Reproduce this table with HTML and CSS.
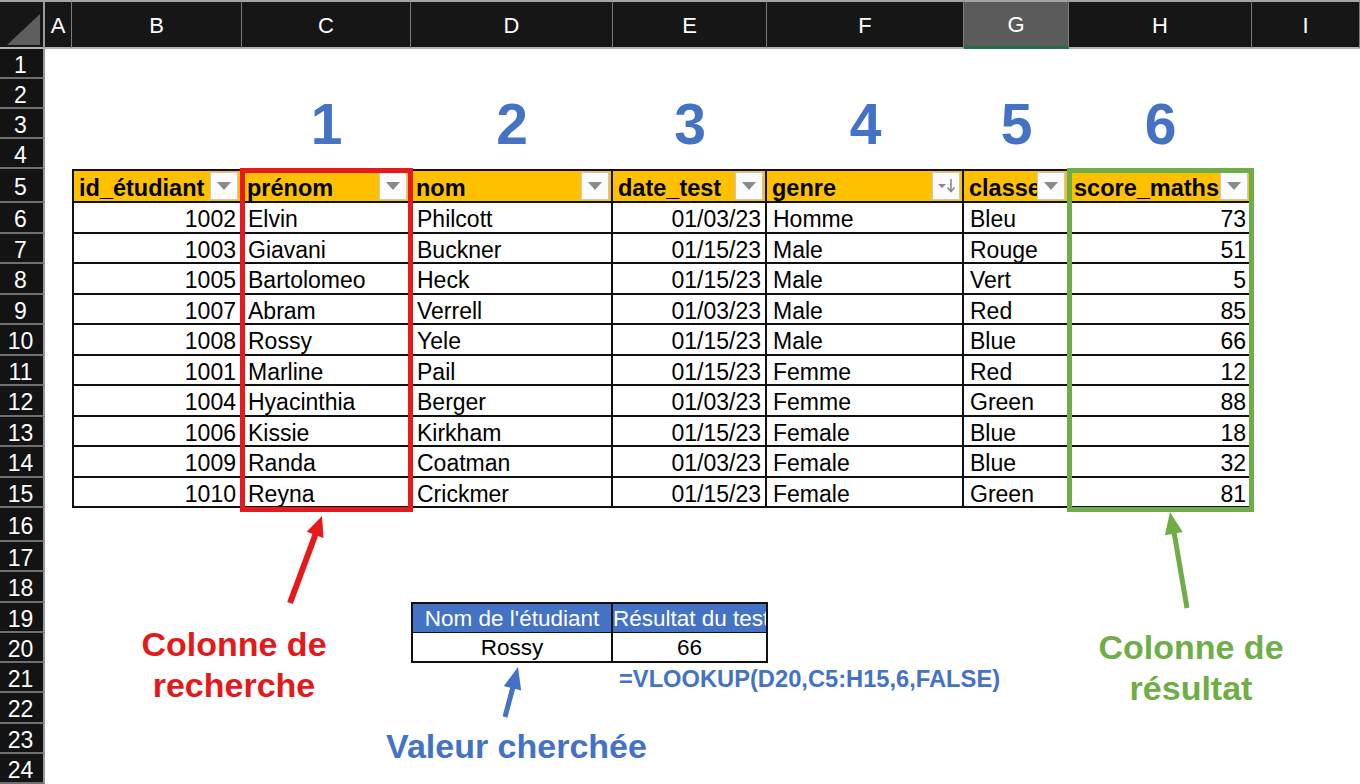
FILE: index.html
```html
<!DOCTYPE html>
<html lang="fr">
<head>
<meta charset="utf-8">
<title>RECHERCHEV</title>
<link rel="stylesheet" href="styles.css">
</head>
<body>
<div class="sheet">
  <div class="corner"><span class="corner-tri"></span></div>
  <div class="colhead">A</div>
  <div class="colhead">B</div>
  <div class="colhead">C</div>
  <div class="colhead">D</div>
  <div class="colhead">E</div>
  <div class="colhead">F</div>
  <div class="colhead colhead-sel">G</div>
  <div class="colhead">H</div>
  <div class="colhead">I</div>

  <div class="rowhead">1</div><div class="rowhead">2</div><div class="rowhead">3</div><div class="rowhead">4</div>
  <div class="rowhead">5</div><div class="rowhead">6</div><div class="rowhead">7</div><div class="rowhead">8</div>
  <div class="rowhead">9</div><div class="rowhead">10</div><div class="rowhead">11</div><div class="rowhead">12</div>
  <div class="rowhead">13</div><div class="rowhead">14</div><div class="rowhead">15</div><div class="rowhead">16</div>
  <div class="rowhead">17</div><div class="rowhead">18</div><div class="rowhead">19</div><div class="rowhead">20</div>
  <div class="rowhead">21</div><div class="rowhead">22</div><div class="rowhead">23</div><div class="rowhead">24</div>

  <div class="num col-c">1</div>
  <div class="num col-d">2</div>
  <div class="num col-e">3</div>
  <div class="num col-f">4</div>
  <div class="num col-g">5</div>
  <div class="num col-h">6</div>

  <div class="tbl">
    <div class="th first"><span class="th-text">id_étudiant</span><span class="fbtn"><span class="tri"></span></span></div>
    <div class="th"><span class="th-text">prénom</span><span class="fbtn"><span class="tri"></span></span></div>
    <div class="th"><span class="th-text">nom</span><span class="fbtn"><span class="tri"></span></span></div>
    <div class="th"><span class="th-text">date_test</span><span class="fbtn"><span class="tri"></span></span></div>
    <div class="th"><span class="th-text">genre</span><span class="fbtn"><svg class="sort" width="22" height="16" viewBox="0 0 22 16"><path d="M3 6 L11 6 L7 10 Z" fill="#8a8a8a"/><path d="M16 1 L16 13 M12.5 9.5 L16 13.5 L19.5 9.5" stroke="#8a8a8a" stroke-width="1.6" fill="none"/></svg></span></div>
    <div class="th"><span class="th-text">classe</span><span class="fbtn"><span class="tri"></span></span></div>
    <div class="th"><span class="th-text">score_maths</span><span class="fbtn"><span class="tri"></span></span></div>

    <div class="td r first">1002</div><div class="td">Elvin</div><div class="td">Philcott</div><div class="td r">01/03/23</div><div class="td">Homme</div><div class="td">Bleu</div><div class="td r">73</div>
    <div class="td r first">1003</div><div class="td">Giavani</div><div class="td">Buckner</div><div class="td r">01/15/23</div><div class="td">Male</div><div class="td">Rouge</div><div class="td r">51</div>
    <div class="td r first">1005</div><div class="td">Bartolomeo</div><div class="td">Heck</div><div class="td r">01/15/23</div><div class="td">Male</div><div class="td">Vert</div><div class="td r">5</div>
    <div class="td r first">1007</div><div class="td">Abram</div><div class="td">Verrell</div><div class="td r">01/03/23</div><div class="td">Male</div><div class="td">Red</div><div class="td r">85</div>
    <div class="td r first">1008</div><div class="td">Rossy</div><div class="td">Yele</div><div class="td r">01/15/23</div><div class="td">Male</div><div class="td">Blue</div><div class="td r">66</div>
    <div class="td r first">1001</div><div class="td">Marline</div><div class="td">Pail</div><div class="td r">01/15/23</div><div class="td">Femme</div><div class="td">Red</div><div class="td r">12</div>
    <div class="td r first">1004</div><div class="td">Hyacinthia</div><div class="td">Berger</div><div class="td r">01/03/23</div><div class="td">Femme</div><div class="td">Green</div><div class="td r">88</div>
    <div class="td r first">1006</div><div class="td">Kissie</div><div class="td">Kirkham</div><div class="td r">01/15/23</div><div class="td">Female</div><div class="td">Blue</div><div class="td r">18</div>
    <div class="td r first">1009</div><div class="td">Randa</div><div class="td">Coatman</div><div class="td r">01/03/23</div><div class="td">Female</div><div class="td">Blue</div><div class="td r">32</div>
    <div class="td r first">1010</div><div class="td">Reyna</div><div class="td">Crickmer</div><div class="td r">01/15/23</div><div class="td">Female</div><div class="td">Green</div><div class="td r">81</div>
  </div>

  <div class="lookup">
    <div class="lh first">Nom de l'étudiant</div>
    <div class="lh lh-left">Résultat du test</div>
    <div class="ld first">Rossy</div>
    <div class="ld">66</div>
  </div>

  <div class="formula">=VLOOKUP(D20,C5:H15,6,FALSE)</div>

  <div class="label label-red">Colonne de<br>recherche</div>
  <div class="label label-blue">Valeur cherchée</div>
  <div class="label label-green">Colonne de<br>résultat</div>

  <svg class="overlay" width="1360" height="784" viewBox="0 0 1360 784">
    <rect x="242.5" y="170.5" width="168" height="339" fill="none" stroke="#e8191a" stroke-width="5"/>
    <rect x="1069.5" y="170.5" width="182" height="339" fill="none" stroke="#6fad47" stroke-width="5"/>
    <line x1="290" y1="603" x2="316" y2="533" stroke="#e8191a" stroke-width="6"/>
    <polygon points="322,516 323.5,537.9 306.7,531.7" fill="#e8191a"/>
    <line x1="505" y1="717" x2="513" y2="687" stroke="#4472c4" stroke-width="5"/>
    <polygon points="518,667 521.2,690.6 503.8,686" fill="#4472c4"/>
    <line x1="1187" y1="608" x2="1174" y2="532" stroke="#6fad47" stroke-width="5"/>
    <polygon points="1170,512 1182.7,532.1 1164.9,535.3" fill="#6fad47"/>
  </svg>
</div>
</body>
</html>
```

FILE: styles.css
```css
* { box-sizing: border-box; }
html, body { margin: 0; padding: 0; background: #fff; }
body { width: 1360px; height: 784px; overflow: hidden; font-family: "Liberation Sans", Arial, sans-serif; color: #000; }

.sheet {
  position: relative;
  width: 1360px;
  height: 784px;
  display: grid;
  grid-template-columns: 45px 27px 170px 169px 202px 154px 197px 105px 183px 108px;
  grid-template-rows: 49px 30px 30px 30px 30px 34px repeat(10, 30.5px) 34px repeat(8, 30.25px);
  background: #fff;
}

.corner {
  grid-row: 1; grid-column: 1;
  background: #161616;
  border-top: 2px solid #a4a4a4;
  border-bottom: 2px solid #b4b4b4;
  border-right: 2px solid #9a9a9a;
  position: relative;
}
.corner-tri {
  position: absolute;
  right: 3px; bottom: 2px;
  width: 0; height: 0;
  border-left: 33px solid transparent;
  border-bottom: 31px solid #5e5e5e;
}

.colhead {
  grid-row: 1;
  background: #161616;
  color: #fff;
  font-size: 22px;
  display: flex; align-items: center; justify-content: center;
  border-top: 2px solid #a4a4a4;
  border-bottom: 2px solid #b4b4b4;
  border-right: 1px solid #7c7c7c;
  padding-top: 2px;
}
.colhead-sel { background: #5b5b5b; border-bottom: 3px solid #1e7145; }

.rowhead {
  grid-column: 1;
  background: #131313;
  color: #fff;
  font-size: 23px;
  display: flex; align-items: center; justify-content: center;
  border-right: 2px solid #9a9a9a;
  border-bottom: 2px solid #6f6f6f;
  padding-right: 2px;
  padding-top: 5px;
}

.num {
  grid-row: 4;
  display: flex; align-items: center; justify-content: center;
  color: #4472c4;
  font-weight: bold;
  font-size: 57px;
  line-height: 1;
}
.col-c { grid-column: 4; }
.col-d { grid-column: 5; }
.col-e { grid-column: 6; }
.col-f { grid-column: 7; }
.col-g { grid-column: 8; }
.col-h { grid-column: 9; }

.tbl {
  grid-row: 6 / 17;
  grid-column: 3 / 10;
  display: grid;
  grid-template-columns: 170px 169px 202px 154px 197px 105px 183px;
  grid-template-rows: 34px repeat(10, 30.5px);
}
.th {
  background: #ffc000;
  border-top: 2px solid #111;
  border-right: 2px solid #111;
  border-bottom: 2px solid #111;
  display: flex; align-items: stretch;
  font-weight: bold;
  font-size: 23.5px;
  padding: 1px 2px 0 5px;
  min-width: 0;
}
.th.first, .td.first { border-left: 2px solid #111; }
.th-text {
  flex: 1 1 auto;
  min-width: 0;
  overflow: hidden;
  white-space: nowrap;
  line-height: 25px;
  padding-top: 4px;
}
.fbtn {
  flex: 0 0 28px;
  background: #fbfbfb;
  border: 1px solid #c9c9c9;
  margin-bottom: 1px;
  display: flex; align-items: center; justify-content: center;
}
.tri {
  width: 0; height: 0;
  border-left: 7px solid transparent;
  border-right: 7px solid transparent;
  border-top: 8px solid #8a8a8a;
}
.sort { display: block; }

.td {
  border-right: 2px solid #111;
  border-bottom: 2px solid #111;
  font-size: 23px;
  display: flex; align-items: center;
  padding: 5px 6px 0 6px;
  white-space: nowrap;
  overflow: hidden;
}
.td.r { justify-content: flex-end; padding-right: 4px; }

.lookup {
  grid-row: 20 / 22;
  grid-column: 5 / 7;
  display: grid;
  grid-template-columns: 202px 155px;
  grid-template-rows: 31px 30px;
  margin-top: -1px;
}
.lh {
  background: #4472c4;
  color: #fff;
  font-size: 22.5px;
  display: flex; align-items: center; justify-content: center;
  border-top: 2px solid #111;
  border-right: 2px solid #111;
  border-bottom: 1px solid #111;
  white-space: nowrap;
  overflow: hidden;
  padding-top: 2px;
}
.lh.first, .ld.first { border-left: 2px solid #111; }
.lh-left { justify-content: flex-start; padding-left: 0; }
.ld {
  font-size: 22.5px;
  display: flex; align-items: center; justify-content: center;
  border-right: 2px solid #111;
  border-bottom: 2px solid #111;
  padding-top: 2px;
}

.formula {
  grid-row: 22;
  grid-column: 6 / 9;
  color: #4472c4;
  font-weight: bold;
  font-size: 23.7px;
  white-space: nowrap;
  display: flex; align-items: center;
  padding-left: 6px;
  padding-top: 2px;
}

.label {
  font-weight: bold;
  font-size: 34px;
  line-height: 41px;
  text-align: center;
  white-space: nowrap;
  display: flex; align-items: center; justify-content: center;
}
.label-red {
  grid-row: 20 / 23;
  grid-column: 3 / 5;
  color: #e4191a;
  padding-right: 15px;
  padding-top: 34px;
}
.label-green {
  grid-row: 20 / 23;
  grid-column: 9 / 11;
  color: #6fad47;
  padding-right: 47px;
  padding-top: 41px;
}
.label-blue {
  grid-row: 24 / 26;
  grid-column: 4 / 7;
  color: #4472c4;
  padding-left: 24px;
  padding-bottom: 15px;
}

.overlay {
  position: absolute;
  left: 0; top: 0;
  pointer-events: none;
}
```
